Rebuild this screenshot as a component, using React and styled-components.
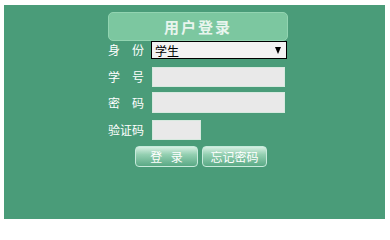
import React from "react";
import styled, { createGlobalStyle } from "styled-components";

const GlobalStyle = createGlobalStyle`
  html, body {
    margin: 0;
    padding: 0;
    background: #ffffff;
  }
  body {
    font-family: "Liberation Sans", "Noto Sans CJK SC", sans-serif;
  }
`;

const Page = styled.div`
  width: 390px;
  height: 224px;
  padding: 5px 0 0 4px;
  box-sizing: border-box;
`;

const Panel = styled.div`
  width: 381px;
  height: 214px;
  background: #4a9c79;
  box-sizing: border-box;
  padding: 7px 0 0 104px;
`;

const Form = styled.div`
  width: 180px;
  display: flex;
  flex-direction: column;
`;

const Title = styled.div`
  height: 29px;
  box-sizing: border-box;
  border: 1px solid #92d4b1;
  border-radius: 5px;
  background: #7cc7a0;
  color: #e8f5ee;
  font-size: 15px;
  font-weight: bold;
  letter-spacing: 2px;
  display: flex;
  align-items: center;
  justify-content: center;
  font-family: "Noto Sans CJK SC", sans-serif;
`;

const Row = styled.div`
  display: flex;
  align-items: center;
  margin-top: ${(p) => p.$mt}px;
`;

const Label = styled.span`
  width: ${(p) => p.$w || 44}px;
  flex: none;
  color: #ffffff;
  font-size: 12px;
  line-height: 14px;
  font-family: "Noto Sans CJK SC", sans-serif;
`;

const Select = styled.div`
  width: 136px;
  height: 18px;
  box-sizing: border-box;
  border: 1px solid #000;
  background: #f3f3f3;
  display: flex;
  align-items: center;
  justify-content: space-between;
  padding: 0 5px 0 3px;
  font-size: 12px;
  color: #000;
  font-family: "Noto Sans CJK SC", sans-serif;
`;

const Arrow = styled.span`
  width: 0;
  height: 0;
  border-left: 3.5px solid transparent;
  border-right: 3.5px solid transparent;
  border-top: 7px solid #000;
`;

const Input = styled.div`
  width: ${(p) => p.$w}px;
  height: ${(p) => p.$h || 20}px;
  background: #e9e9e9;
  border: 1px solid #d7e9df;
  box-sizing: border-box;
`;

const Buttons = styled.div`
  display: flex;
  gap: 4px;
  margin-top: 6px;
  margin-left: 27px;
`;

const Button = styled.div`
  width: ${(p) => p.$w}px;
  height: 21px;
  box-sizing: border-box;
  border: 1px solid #c6eadb;
  border-radius: 4px;
  background: linear-gradient(#d6efe2 0%, #93cfb1 40%, #5aa985 100%);
  color: #ffffff;
  font-size: 12px;
  word-spacing: ${(p) => p.$ws || 0}px;
  display: flex;
  align-items: center;
  justify-content: center;
  font-family: "Noto Sans CJK SC", sans-serif;
`;

export default function App() {
  return (
    <Page>
      <GlobalStyle />
      <Panel>
        <Form>
          <Title>用户登录</Title>
          <Row $mt={0}>
            <Label $w={43}>身　份</Label>
            <Select>
              <span>学生</span>
              <Arrow />
            </Select>
          </Row>
          <Row $mt={8}>
            <Label>学　号</Label>
            <Input $w={133} />
          </Row>
          <Row $mt={5}>
            <Label>密　码</Label>
            <Input $w={133} $h={21} />
          </Row>
          <Row $mt={7}>
            <Label>验证码</Label>
            <Input $w={49} />
          </Row>
          <Buttons>
            <Button $w={63} $ws={6}>登 录</Button>
            <Button $w={65}>忘记密码</Button>
          </Buttons>
        </Form>
      </Panel>
    </Page>
  );
}
